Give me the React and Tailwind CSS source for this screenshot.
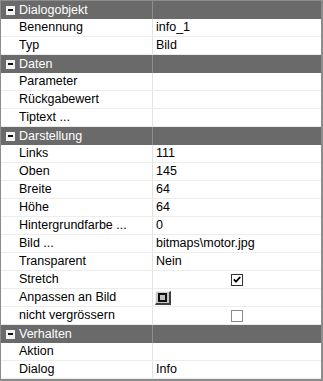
import React from "react";

const sections = [
  {
    title: "Dialogobjekt",
    rows: [
      ["Benennung", "info_1"],
      ["Typ", "Bild"],
    ],
  },
  {
    title: "Daten",
    rows: [
      ["Parameter", ""],
      ["Rückgabewert", ""],
      ["Tiptext ...", ""],
    ],
  },
  {
    title: "Darstellung",
    rows: [
      ["Links", "111"],
      ["Oben", "145"],
      ["Breite", "64"],
      ["Höhe", "64"],
      ["Hintergrundfarbe ...", "0"],
      ["Bild ...", "bitmaps\\motor.jpg"],
      ["Transparent", "Nein"],
      ["Stretch", { type: "check", checked: true }],
      ["Anpassen an Bild", { type: "button" }],
      ["nicht vergrössern", { type: "check", checked: false }],
    ],
  },
  {
    title: "Verhalten",
    rows: [
      ["Aktion", ""],
      ["Dialog", "Info"],
    ],
  },
];

function Minus() {
  return (
    <div className="w-[9px] h-[9px] bg-[#f2f2f2] flex items-center justify-center">
      <div className="w-[5px] h-[2px] bg-[#111]" />
    </div>
  );
}

function Value({ v }) {
  if (typeof v === "string") {
    return <span className="pl-[3px]">{v}</span>;
  }
  if (v.type === "check") {
    return (
      <div className="flex-1 flex justify-center">
        <div
          className={
            "w-[12px] h-[12px] bg-white flex items-center justify-center " +
            (v.checked ? "border border-[#333]" : "border border-[#8a8a8a]")
          }
        >
          {v.checked && (
            <svg width="8" height="7" viewBox="0 0 8 7">
              <path d="M0.8 3.4 L3 5.6 L7.2 1" stroke="#000" strokeWidth="1.8" fill="none" />
            </svg>
          )}
        </div>
      </div>
    );
  }
  return (
    <div className="ml-[2px] w-[16px] h-[14px] bg-[#c8c8c8] border-t border-l border-[#f4f4f4] border-r-2 border-b-2 border-r-[#404040] border-b-[#404040] flex items-center justify-center">
      <div className="w-[9px] h-[9px] border-2 border-[#111] bg-[#c0c0c0]" />
    </div>
  );
}

export default function App() {
  return (
    <div
      className="w-[323px] h-[381px] bg-white border-t border-l border-r-2 border-b-2 border-[#8c8c8c] text-[12.5px] leading-none text-black overflow-hidden"
      style={{ fontFamily: '"Liberation Sans", Arial, sans-serif' }}
    >
      {sections.map((s) => (
        <div key={s.title}>
          <div className="h-[18px] flex bg-[#6a6a6a] text-white">
            <div className="w-[151px] flex items-center pl-[5px] gap-[4px] shrink-0">
              <Minus />
              <span>{s.title}</span>
            </div>
            <div className="w-px bg-[#8e8e8e]" />
            <div className="flex-1" />
          </div>
          {s.rows.map(([label, v]) => (
            <div key={label} className="h-[18px] flex border-b border-[#ececec]">
              <div className="w-[151px] shrink-0 flex items-center pl-[18px]">{label}</div>
              <div className="w-px bg-[#e2e2e2]" />
              <div className="flex-1 flex items-center">
                <Value v={v} />
              </div>
            </div>
          ))}
        </div>
      ))}
    </div>
  );
}
